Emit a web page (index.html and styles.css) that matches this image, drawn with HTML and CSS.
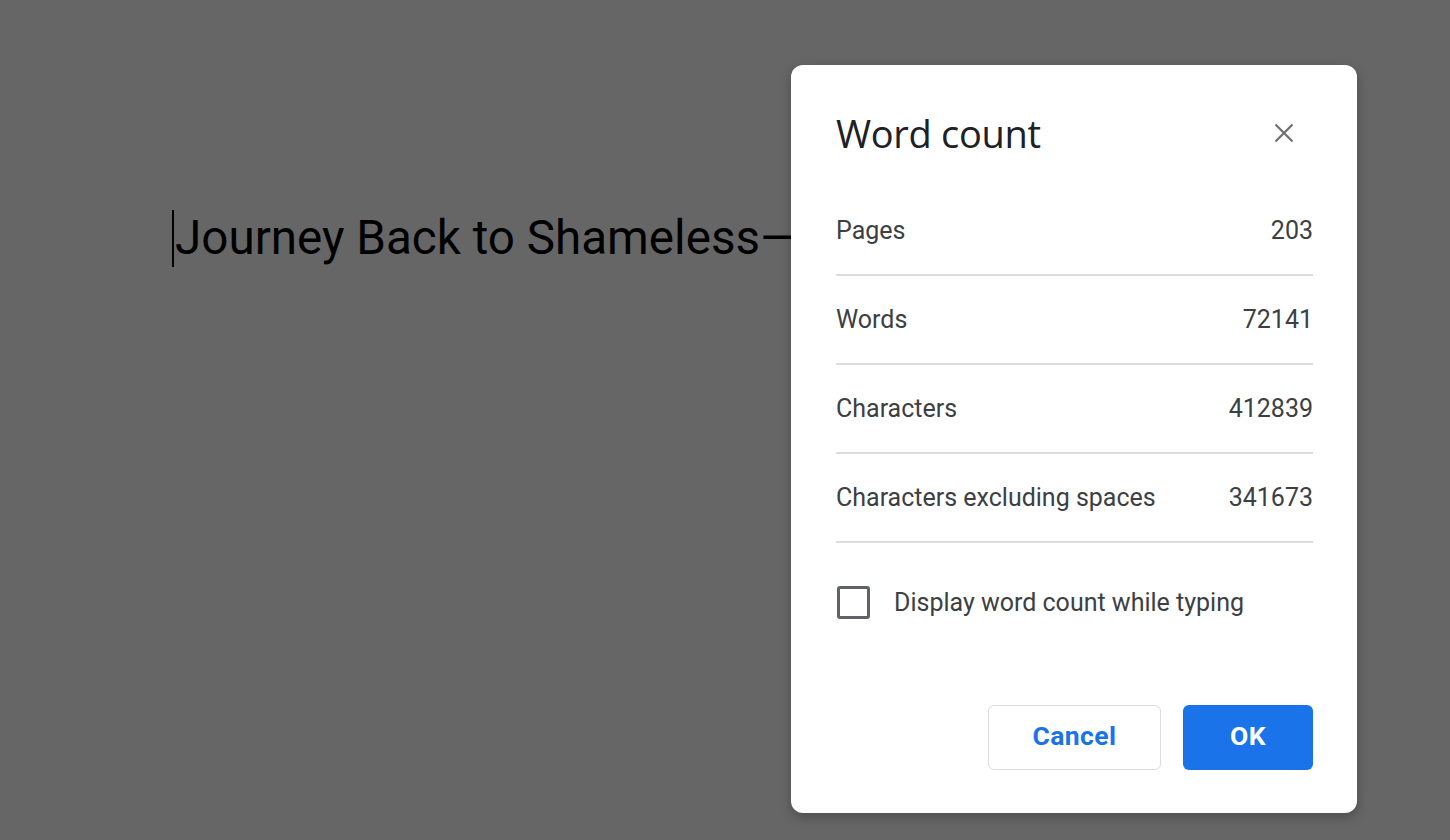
FILE: index.html
```html
<!DOCTYPE html>
<html>
<head>
<meta charset="utf-8">
<link rel="stylesheet" href="styles.css">
</head>
<body>
<div class="doc">
  <div class="doc-line"><span class="cursor"></span>Journey Back to Shameless—</div>
</div>
<div class="dialog">
  <div class="dlg-head">
    <div class="dlg-title">Word count</div>
    <div class="dlg-close">
      <svg width="20" height="20" viewBox="0 0 20 20"><path d="M1.5 1.5 L18.5 18.5 M18.5 1.5 L1.5 18.5" stroke="#6f6f6f" stroke-width="2.2" fill="none"/></svg>
    </div>
  </div>
  <div class="row"><span>Pages</span><span>203</span></div>
  <div class="row"><span>Words</span><span>72141</span></div>
  <div class="row"><span>Characters</span><span>412839</span></div>
  <div class="row"><span>Characters excluding spaces</span><span>341673</span></div>
  <div class="check-row"><span class="checkbox"></span><span class="check-label">Display word count while typing</span></div>
  <div class="actions">
    <button class="btn btn-cancel">Cancel</button>
    <button class="btn btn-ok">OK</button>
  </div>
</div>
</body>
</html>
```
FILE: styles.css
```css
html, body {
  margin: 0;
  height: 100%;
}
body {
  background: #666666;
  font-family: Roboto, "Liberation Sans", sans-serif;
  overflow: hidden;
}
.doc {
  padding: 208px 0 0 172px;
}
.doc-line {
  display: flex;
  align-items: center;
  font-family: Roboto, sans-serif;
  font-size: 47.6px;
  color: #000;
  line-height: 60px;
  white-space: nowrap;
}
.cursor {
  display: inline-block;
  width: 2px;
  height: 57px;
  background: #000;
  margin-right: 1px;
}
.dialog {
  position: absolute;
  left: 791px;
  top: 65px;
  width: 566px;
  height: 748px;
  box-sizing: border-box;
  background: #fff;
  border-radius: 12px;
  padding: 0 44px 43px 45px;
  display: flex;
  flex-direction: column;
  box-shadow: 0 4px 12px rgba(0,0,0,0.25);
}
.dlg-head {
  display: flex;
  align-items: center;
  justify-content: space-between;
  height: 56px;
  margin-top: 40px;
  margin-bottom: 26px;
}
.dlg-title {
  font-family: "Open Sans", Roboto, sans-serif;
  font-size: 38px;
  color: #202124;
  letter-spacing: -0.3px;
}
.dlg-close {
  width: 20px;
  height: 20px;
  margin-right: 19px;
  display: flex;
}
.row {
  display: flex;
  justify-content: space-between;
  align-items: center;
  height: 87px;
  border-bottom: 2px solid #dadce0;
  font-size: 25px;
  color: #3c4043;
}
.check-row {
  display: flex;
  align-items: center;
  margin-top: 43px;
  height: 33px;
}
.checkbox {
  width: 27px;
  height: 27px;
  border: 3px solid #5f6368;
  border-radius: 3px;
  margin-left: 1px;
  margin-right: 24px;
}
.check-label {
  font-size: 25px;
  color: #3c4043;
}
.actions {
  margin-top: auto;
  display: flex;
  justify-content: flex-end;
  gap: 22px;
}
.btn {
  height: 65px;
  border-radius: 6px;
  font-family: Roboto, sans-serif;
  font-size: 26.5px;
  font-weight: 700;
  letter-spacing: 0.4px;
  box-sizing: border-box;
  padding: 0 0 4px 0;
}
.btn-cancel {
  width: 173px;
  background: #fff;
  border: 1px solid #dadce0;
  color: #1a73e8;
}
.btn-ok {
  width: 130px;
  background: #1a73e8;
  border: none;
  color: #fff;
}
```
